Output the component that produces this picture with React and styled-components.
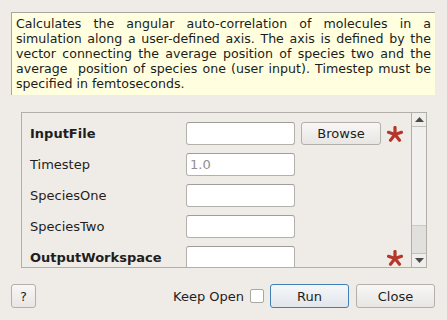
import styled, { createGlobalStyle } from "styled-components";

const GlobalStyle = createGlobalStyle`
  body {
    margin: 0;
    background: #efebe7;
    font-family: "DejaVu Sans", "Liberation Sans", sans-serif;
    color: #222;
  }
`;

const Dialog = styled.div`
  width: 447px;
  height: 320px;
  box-sizing: border-box;
  padding: 12px 12px 0 11px;
  display: flex;
  flex-direction: column;
  background: #efebe7;
`;

const Description = styled.div`
  height: 83px;
  box-sizing: border-box;
  background: #ffffdf;
  border-top: 1px solid #a9a6a2;
  border-left: 1px solid #a9a6a2;
  padding: 3px 4px 0 4px;
  font-size: 12.6px;
  line-height: 15px;
  color: #1c1c1c;
`;

const DescLine = styled.div`
  white-space: pre;
  text-align: ${(p) => (p.$last ? "left" : "justify")};
  text-align-last: ${(p) => (p.$last ? "left" : "justify")};
`;

const Frame = styled.div`
  margin: 17px 8px 0 10px;
  height: 156px;
  box-sizing: border-box;
  border: 1px solid #b2aea9;
  display: flex;
  overflow: hidden;
`;

const Fields = styled.div`
  flex: 1;
  padding: 9px 0 0 8px;
  display: flex;
  flex-direction: column;
  gap: 8px;
`;

const Row = styled.div`
  display: flex;
  align-items: center;
  height: 23px;
  flex-shrink: 0;
`;

const Label = styled.div`
  width: 156px;
  font-size: 13px;
  font-weight: ${(p) => (p.$required ? "bold" : "normal")};
  color: #1e1e1e;
`;

const Input = styled.div`
  width: 109px;
  height: 23px;
  box-sizing: border-box;
  border: 1px solid #b4b0ab;
  border-top-color: #a09c97;
  border-radius: 3px;
  background: #fff;
  font-size: 13px;
  color: #909090;
  padding-left: 3px;
  line-height: 21px;
`;

const Button = styled.div`
  width: ${(p) => p.$w}px;
  height: ${(p) => p.$h || 23}px;
  box-sizing: border-box;
  border: 1px solid ${(p) => (p.$primary ? "#3f7fb5" : "#b3afaa")};
  border-radius: 3px;
  background: ${(p) =>
    p.$primary
      ? "linear-gradient(#f5f7f9, #e1e6eb)"
      : "linear-gradient(#f8f7f6, #e8e6e3)"};
  font-size: 13px;
  color: #1e1e1e;
  display: flex;
  align-items: center;
  justify-content: center;
  margin-left: ${(p) => p.$ml || 0}px;
`;

const StarSlot = styled.div`
  margin-left: ${(p) => p.$ml}px;
  width: 16px;
  height: 16px;
  display: flex;
`;

const Scrollbar = styled.div`
  width: 14px;
  border-left: 1px solid #b2aea9;
  display: flex;
  flex-direction: column;
  background: #f2f0ee;
`;

const Arrow = styled.div`
  height: 13px;
  background: #f0eeeb;
  display: flex;
  align-items: center;
  justify-content: center;
  border-${(p) => (p.$down ? "top" : "bottom")}: 1px solid #c4c0bb;
`;

const Trough = styled.div`
  flex: 1;
  display: flex;
  flex-direction: column;
  justify-content: flex-end;
`;

const Handle = styled.div`
  height: 27px;
  background: #e2e0dd;
  border-top: 1px solid #cdc9c4;
`;

const Footer = styled.div`
  margin-top: 16px;
  display: flex;
  align-items: center;
  height: 24px;
`;

const Spacer = styled.div`
  flex: 1;
`;

const KeepOpen = styled.div`
  font-size: 13px;
  color: #1e1e1e;
`;

const Check = styled.div`
  width: 14px;
  height: 14px;
  box-sizing: border-box;
  border: 1px solid #aaa6a1;
  border-radius: 2px;
  background: #fff;
  margin-left: 6px;
`;

const Star = () => (
  <svg width="16" height="16" viewBox="0 0 16 16">
    <g stroke="#b5362a" strokeWidth="3.2" strokeLinecap="round">
      <line x1="8" y1="8.5" x2="8" y2="1.5" />
      <line x1="8" y1="8.5" x2="1.5" y2="6.3" />
      <line x1="8" y1="8.5" x2="14.5" y2="6.3" />
      <line x1="8" y1="8.5" x2="3.5" y2="14.2" />
      <line x1="8" y1="8.5" x2="12.5" y2="14.2" />
    </g>
  </svg>
);

const Tri = ({ down }) => (
  <svg width="9" height="5" viewBox="0 0 9 5">
    <polygon
      points={down ? "0,0 9,0 4.5,5" : "0,5 9,5 4.5,0"}
      fill="#4a4a4a"
    />
  </svg>
);

const descLines = [
  "Calculates the angular auto-correlation of molecules in a",
  "simulation along a user-defined axis. The axis is defined by the",
  "vector connecting the average position of species two and the",
  "average  position of species one (user input). Timestep must be",
  "specified in femtoseconds.",
];

const fields = [
  { name: "InputFile", required: true, browse: true },
  { name: "Timestep", value: "1.0" },
  { name: "SpeciesOne" },
  { name: "SpeciesTwo" },
  { name: "OutputWorkspace", required: true },
];

export default function App() {
  return (
    <Dialog>
      <GlobalStyle />
      <Description>
        {descLines.map((line, i) => (
          <DescLine key={i} $last={i === descLines.length - 1}>
            {line}
          </DescLine>
        ))}
      </Description>
      <Frame>
        <Fields>
          {fields.map((f) => (
            <Row key={f.name}>
              <Label $required={f.required}>{f.name}</Label>
              <Input>{f.value}</Input>
              {f.browse && (
                <Button $w={80} $ml={6}>
                  Browse
                </Button>
              )}
              {f.required && (
                <StarSlot $ml={f.browse ? 6 : 92}>
                  <Star />
                </StarSlot>
              )}
            </Row>
          ))}
        </Fields>
        <Scrollbar>
          <Arrow>
            <Tri />
          </Arrow>
          <Trough>
            <Handle />
          </Trough>
          <Arrow $down>
            <Tri down />
          </Arrow>
        </Scrollbar>
      </Frame>
      <Footer>
        <Button $w={25} $h={24}>
          ?
        </Button>
        <Spacer />
        <KeepOpen>Keep Open</KeepOpen>
        <Check />
        <Button $w={79} $h={24} $ml={6} $primary>
          Run
        </Button>
        <Button $w={79} $h={24} $ml={7}>
          Close
        </Button>
      </Footer>
    </Dialog>
  );
}
